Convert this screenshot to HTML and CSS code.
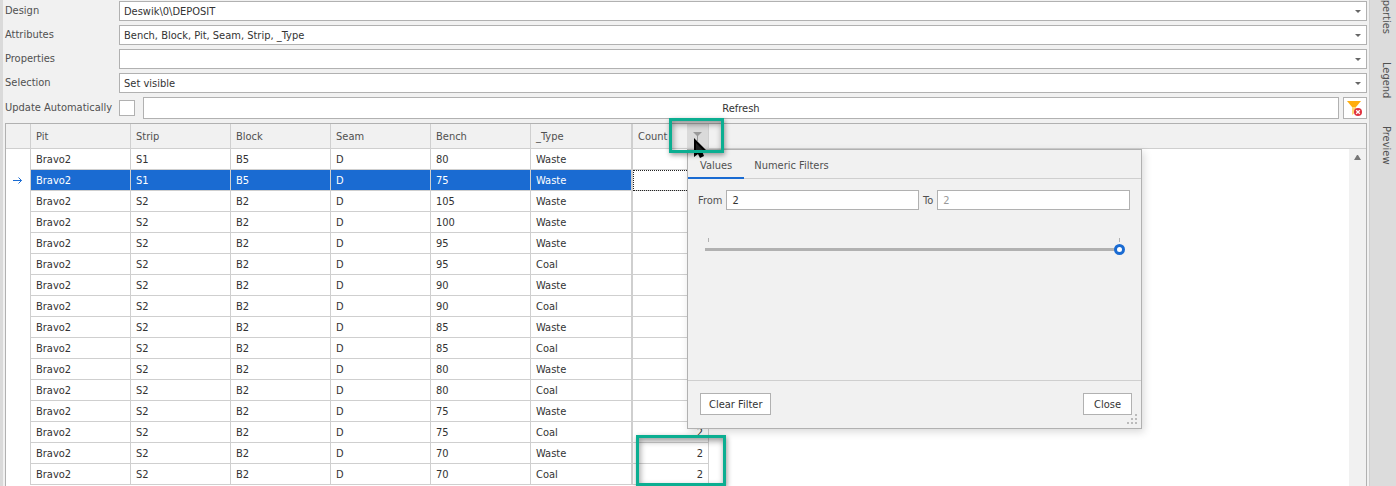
FILE: index.html
```
<!DOCTYPE html>
<html lang="en">

<head>
    <meta charset="UTF-8">
    <meta name="viewport" content="width=device-width, initial-scale=1.0">
    <title>Deposit</title>
    <link rel="stylesheet" href="styles.css">
</head>

<body>
    <main class="panel">
        <form class="settings">
            <label for="design">Design</label>
            <select id="design">
                <option>Deswik\0\DEPOSIT</option>
            </select>
            <label for="attributes">Attributes</label>
            <select id="attributes">
                <option>Bench, Block, Pit, Seam, Strip, _Type</option>
            </select>
            <label for="properties">Properties</label>
            <select id="properties">
                <option></option>
            </select>
            <label for="selection">Selection</label>
            <select id="selection">
                <option>Set visible</option>
            </select>
            <label for="auto">Update Automatically</label>
            <div class="update">
                <input type="checkbox" id="auto">
                <button type="button" class="refresh">Refresh</button>
                <button type="button" class="reset" aria-label="Remove filters">
                    <svg width="16" height="16" viewBox="0 0 16 16">
                        <path d="M5 6h4v6l-4 3z" fill="#ffd673" />
                        <path d="M0 1h14L9 7H5z" fill="#ffad0d" />
                        <circle cx="11" cy="12" r="4" fill="#e0323f" />
                        <path d="M9.2 10.2l3.6 3.6M12.8 10.2l-3.6 3.6" stroke="#fff" stroke-width="1.3" />
                    </svg>
                </button>
            </div>
        </form>

        <div class="grid">
            <table>
                <colgroup>
                    <col class="col-mark">
                    <col class="col-data" span="5">
                    <col class="col-type">
                    <col class="col-count">
                    <col>
                </colgroup>
                <thead>
                    <tr>
                        <th></th>
                        <th>Pit</th>
                        <th>Strip</th>
                        <th>Block</th>
                        <th>Seam</th>
                        <th>Bench</th>
                        <th class="type">_Type</th>
                        <th class="count">
                            <div class="count-head">
                                Count
                                <button type="button" class="filter" aria-label="Filter Count">
                                    <svg width="9" height="9" viewBox="0 0 9 9">
                                        <path d="M0 0h9L5 4v5H4V4z" fill="#999" />
                                    </svg>
                                </button>
                            </div>
                        </th>
                        <th class="rest"></th>
                    </tr>
                </thead>
                <tbody id="rows"></tbody>
            </table>
            <div class="scrollbar">
                <button type="button" aria-label="Scroll up">
                    <svg width="7" height="5" viewBox="0 0 7 5">
                        <path d="M3 0h1l3 5H0z" fill="#777" />
                    </svg>
                </button>
            </div>

            <div class="popup">
                <div class="tabs">
                    <button type="button" class="active">Values</button>
                    <button type="button">Numeric Filters</button>
                </div>
                <div class="values">
                    <div class="range">
                        <label for="from">From</label>
                        <input type="text" id="from" value="2">
                        <label for="to">To</label>
                        <input type="text" id="to" placeholder="2">
                    </div>
                    <div class="ticks"><i></i><i></i></div>
                    <input type="range" class="slider" min="1" max="2" value="2" aria-label="Count">
                </div>
                <div class="footer">
                    <button type="button">Clear Filter</button>
                    <button type="button" class="close">Close</button>
                </div>
                <svg class="grip" width="10" height="10" viewBox="0 0 10 10">
                    <path d="M8 0h2v2H8zM4 4h2v2H4zM8 4h2v2H8zM0 8h2v2H0zM4 8h2v2H4zM8 8h2v2H8z" fill="#bbb" />
                </svg>
            </div>

            <svg class="cursor" width="13" height="20" viewBox="0 0 13 20">
                <path d="M0 0l13 13H8l2 5-4 2-2-4-4 3z" fill="#000" />
                <path d="M2 5l7 7H6L2 14z" fill="#222" />
            </svg>
            <div class="mark mark-filter"></div>
            <div class="mark mark-count"></div>
        </div>
    </main>

    <nav class="side">
        <button type="button">Properties</button>
        <button type="button">Legend</button>
        <button type="button">Preview</button>
    </nav>

    <script>
        const rows = [
            ["S1", "B5", 80, "Waste"],
            ["S1", "B5", 75, "Waste"],
            ["S2", "B2", 105, "Waste"],
            ["S2", "B2", 100, "Waste"],
            ["S2", "B2", 95, "Waste"],
            ["S2", "B2", 95, "Coal"],
            ["S2", "B2", 90, "Waste"],
            ["S2", "B2", 90, "Coal"],
            ["S2", "B2", 85, "Waste"],
            ["S2", "B2", 85, "Coal"],
            ["S2", "B2", 80, "Waste"],
            ["S2", "B2", 80, "Coal"],
            ["S2", "B2", 75, "Waste"],
            ["S2", "B2", 75, "Coal"],
            ["S2", "B2", 70, "Waste"],
            ["S2", "B2", 70, "Coal"]
        ];
        const arrow = '<svg width="9" height="7" viewBox="0 0 9 7"><path d="M0 3.5h8.500M5.500 0.500l3 3-3 3" fill="none" stroke="#1a6bd2"/></svg>';

        document.getElementById("rows").innerHTML = rows.map(([strip, block, bench, type], i) => `
            <tr class="${i == 1 ? "selected" : ""}">
                <td class="marker">${i == 1 ? arrow : ""}</td>
                <td>Bravo2</td>
                <td>${strip}</td>
                <td>${block}</td>
                <td>D</td>
                <td>${bench}</td>
                <td class="type">${type}</td>
                <td class="count">2</td>
                <td class="rest"></td>
            </tr>`).join("");
    </script>
</body>

</html>
```
FILE: styles.css
```
* {
    margin: 0;
    padding: 0;
    box-sizing: border-box;
    font-family: "DejaVu Sans Condensed", Tahoma, sans-serif;
    font-size: 11px;
}

body {
    height: 100vh;
    display: flex;
    overflow: hidden;
    background: #f1f1f1;
    color: #333;
}

svg {
    display: block;
}

button,
select,
input {
    background: #fff;
    border: 1px solid #b1b1b1;
    border-radius: 0;
    color: #333;
    outline: 0;
}

.panel {
    flex: 1;
    min-width: 0;
    display: flex;
    flex-direction: column;
    padding: 1px 2px 0;
    border-left: 3px solid #dadada;
}

.settings {
    display: grid;
    grid-template-columns: 114px 1fr;
    row-gap: 4px;
    align-items: center;
    color: #505050;
}

.settings label {
    line-height: 20px;
    white-space: nowrap;
}

select {
    appearance: none;
    height: 20px;
    padding: 0 4px;
    background: #fff url("data:image/svg+xml,%3Csvg xmlns='http://www.w3.org/2000/svg' width='6' height='3'%3E%3Cpath d='M0 0h6L3 3z' fill='%23666'/%3E%3C/svg%3E") no-repeat right 5px center;
}

.update {
    display: flex;
    align-items: center;
}

.update input {
    appearance: none;
    width: 16px;
    height: 16px;
    margin-right: 8px;
}

.update button {
    height: 22px;
}

.refresh {
    flex: 1;
    margin-right: 4px;
}

.reset {
    width: 24px;
    padding-left: 3px;
}

.grid {
    position: relative;
    flex: 1;
    min-height: 0;
    margin-top: 4px;
    background: #fff;
    border: 1px solid #b1b1b1;
    border-bottom: 0;
}

table {
    width: 100%;
    table-layout: fixed;
    border-collapse: separate;
    border-spacing: 0;
}

.col-mark {
    width: 25px;
}

.col-data {
    width: 100px;
}

.col-type {
    width: 102px;
}

.col-count {
    width: 76px;
}

th,
td {
    border-right: 1px solid #cfcfcf;
    border-bottom: 1px solid #cfcfcf;
    padding: 0 5px;
    text-align: left;
    white-space: nowrap;
}

th {
    height: 25px;
    background: #f1f1f1;
    color: #505050;
    font-weight: normal;
}

td {
    height: 21px;
}

.type {
    border-right-width: 2px;
}

th.count {
    padding-right: 0;
}

td.count {
    text-align: right;
}

.rest {
    border-right: 0;
}

td.rest,
td.marker {
    border-bottom: 0;
}

td.marker {
    padding-left: 7px;
}

.selected td:not(.marker, .count, .rest) {
    background: #1a6bd2;
    color: #fff;
}

.selected .count {
    outline: 1px dotted #222;
    outline-offset: -1px;
}

.count-head {
    display: flex;
    justify-content: space-between;
    align-items: center;
}

.filter {
    width: 21px;
    height: 24px;
    padding-left: 6px;
    background: #dadada;
    border: 0;
}

.scrollbar {
    position: absolute;
    top: 25px;
    right: 0;
    bottom: 0;
    width: 17px;
    background: #f1f1f1;
}

.scrollbar button {
    width: 17px;
    height: 17px;
    padding-left: 5px;
    background: none;
    border: 0;
}

.popup {
    position: absolute;
    top: 25px;
    left: 681px;
    width: 455px;
    height: 280px;
    display: flex;
    flex-direction: column;
    background: #f1f1f1;
    border: 1px solid #b1b1b1;
    box-shadow: 2px 3px 8px rgba(0, 0, 0, 0.15);
    color: #505050;
}

.tabs {
    display: flex;
    height: 29px;
    border-bottom: 1px solid #cfcfcf;
}

.tabs button {
    height: 29px;
    padding: 3px 10px 0;
    background: none;
    border: 0;
    border-bottom: 2px solid transparent;
    color: #505050;
}

.tabs .active {
    padding: 3px 12px 0;
    border-bottom-color: #1a6bd2;
}

.values {
    flex: 1;
    padding: 11px 11px 0 10px;
}

.range {
    display: flex;
    align-items: center;
    gap: 4px;
}

.range input {
    flex: 1;
    min-width: 0;
    height: 20px;
    padding: 0 5px;
}

.range input::placeholder {
    color: #999;
}

.ticks {
    display: flex;
    justify-content: space-between;
    margin: 28px 10px 0;
}

.ticks i {
    width: 1px;
    height: 4px;
    background: #b1b1b1;
}

.slider {
    appearance: none;
    display: block;
    width: 420px;
    height: 11px;
    margin: 2px 0 0 7px;
    background: linear-gradient(#b1b1b1, #b1b1b1) no-repeat left center / 98% 3px;
    border: 0;
}

.slider::-webkit-slider-thumb {
    appearance: none;
    width: 11px;
    height: 11px;
    background: #fff;
    border: 3px solid #1a6bd2;
    border-radius: 50%;
}

.footer {
    display: flex;
    justify-content: space-between;
    height: 48px;
    padding: 12px 9px 0 12px;
    border-top: 1px solid #cfcfcf;
}

.footer button {
    height: 22px;
    padding: 0 8px;
}

.footer .close {
    padding: 0 10px;
}

.grip {
    position: absolute;
    right: 4px;
    bottom: 4px;
}

.mark {
    position: absolute;
    border: 3px solid #0bae91;
    box-shadow: 1px 2px 5px rgba(0, 0, 0, 0.4), inset 1px 3px 6px rgba(0, 0, 0, 0.4);
}

.mark-filter {
    top: -6px;
    left: 663px;
    width: 55px;
    height: 35px;
}

.mark-count {
    top: 311px;
    left: 630px;
    width: 90px;
    height: 51px;
}

.cursor {
    position: absolute;
    top: 14px;
    left: 688px;
}

.side {
    display: flex;
    flex-direction: column;
    align-items: center;
    gap: 28px;
    width: 27px;
    background: #dcdcdc;
    border-left: 1px solid #cfcfcf;
}

.side button {
    writing-mode: vertical-rl;
    background: none;
    border: 0;
    color: #505050;
    margin-left: 7px;
}

.side button:first-child {
    margin-top: -16px;
}
```
